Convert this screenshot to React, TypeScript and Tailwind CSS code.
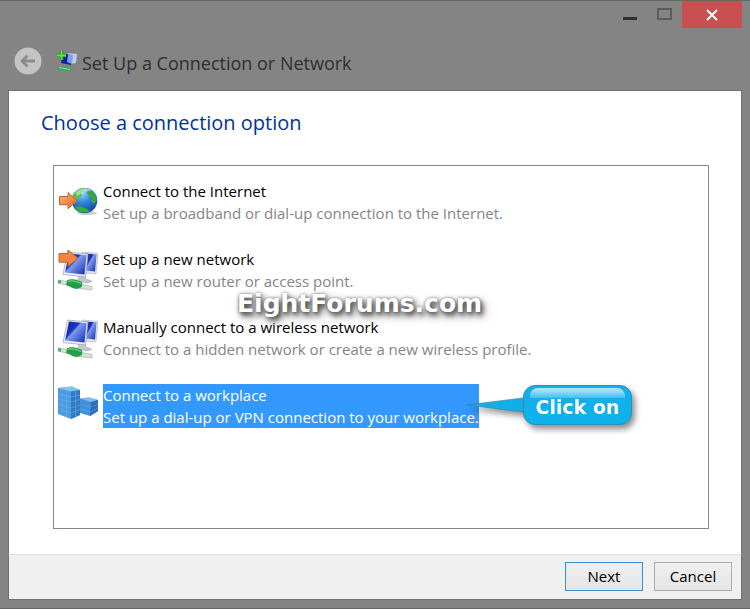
import React from 'react';

const GlobeIcon: React.FC = () => (
  <svg viewBox="0 0 40 40" className="size-10" aria-hidden="true">
    <defs>
      <radialGradient id="globe" cx="0.4" cy="0.2" r="0.85">
        <stop offset="0" stopColor="#a5dcff" />
        <stop offset="0.45" stopColor="#2f86dc" />
        <stop offset="1" stopColor="#0d3f9c" />
      </radialGradient>
      <linearGradient id="arrow" x1="0" y1="0" x2="1" y2="1">
        <stop offset="0" stopColor="#ffb57a" />
        <stop offset="1" stopColor="#e8641c" />
      </linearGradient>
    </defs>
    <ellipse cx="29" cy="33" rx="10" ry="2" fill="#c9ced3" />
    <circle cx="26.500" cy="20.500" r="12.800" fill="url(#globe)" />
    <path d="M16 13c3-3 6-5 10-5l1 3-4 2 1 3-4 2-2 5-4 1c-1-4 0-8 2-11z" fill="#57c24c" />
    <path d="M30 9c5 2 8 6 9 11l-3 4-3-3 1-4-4-2-1-3z" fill="#3aa83b" />
    <path d="M17 27l5-1 7 3 3 2c-5 3-12 2-15-4z" fill="#2fb235" />
    <path d="M18 12c4-4 12-5 16-1-5 0-9 1-15 5z" fill="#fff" opacity="0.45" />
    <path d="M1.500 16.500h8.500v-4l9 8.200-9 8v-4H1.500z" fill="url(#arrow)" stroke="#b96535" />
  </svg>
);

const NetworkIcon: React.FC<{ arrow?: boolean }> = ({ arrow }) => (
  <svg viewBox="0 0 40 44" className="h-11 w-10" aria-hidden="true">
    <defs>
      <linearGradient id="screen" x1="0" y1="0" x2="1" y2="0.9">
        <stop offset="0" stopColor="#1022a0" />
        <stop offset="0.4" stopColor="#1a35c4" />
        <stop offset="0.47" stopColor="#7e9bec" />
        <stop offset="1" stopColor="#1630b8" />
      </linearGradient>
    </defs>
    <path d="M24 4l16 1.500-2 20.500-11-1z" fill="#dfe4ea" stroke="#a8b0ba" strokeWidth="0.6" />
    <path d="M27 5.500l11.500 1-1.500 17-9-1z" fill="url(#screen)" />
    <path d="M20 28l7 0 1 3 6 2-4 2-13-2 4-2z" fill="#c3c8cf" stroke="#9aa2ab" strokeWidth="0.5" />
    <path d="M9.500 4l20.500 2-2.500 23-22.500-2.500z" fill="#e9edf2" stroke="#99a3b0" strokeWidth="0.7" />
    <path d="M11 5.500l17.500 1.700-2 19.300-19.500-2z" fill="url(#screen)" />
    <path d="M0 32l9 1.500 25 5v3.500l-12-1.500-22-5.500z" fill="#dbe2de" stroke="#98a69e" strokeWidth="0.6" />
    <path d="M0 32l3 .5v3.200l-3-.7z" fill="#4fae66" />
    <path d="M9 32.500c4-2 7-1 11 0l4 1.500v5l-5 2c-4 0-7-3-11-4z" fill="#1fa045" />
    <path d="M10 33.500c4-1.500 8 0 13 2" stroke="#8be29a" fill="none" />
    {arrow && (
      <path d="M1 5.500h9V2l10 8.200-10 8v-4H1z" fill="#f5853f" stroke="#b96535" />
    )}
  </svg>
);

const WorkplaceIcon: React.FC = () => (
  <svg viewBox="0 0 40 40" className="size-10" aria-hidden="true">
    <path d="M0 4l14-1.500 8 3.500v25l-9 4-13-5z" fill="#4a9be0" />
    <path d="M0 4l14-1.500 8 3.500-9 1.500z" fill="#83c5f1" />
    <path d="M13 7.500l9-1.500v25l-9 4z" fill="#3079c4" />
    <path d="M0 10l13 3 9-2M0 15l13 3 9-2.500M0 20l13 4 9-3M0 25l13 4 9-3.500M4 5v26M8.500 6v27M17.500 7v26" stroke="#6fb5ea" strokeWidth="0.5" fill="none" />
    <path d="M22 14.500l9-1 9 2.500v11l-8 5-10-3z" fill="#4192da" />
    <path d="M22 14.500l9-1 9 2.500-7 2z" fill="#83c0ec" />
    <path d="M33 18l7-2v11l-8 5z" fill="#2b6db8" />
    <path d="M22 20l10.500 3 7.500-3M22 25l10.500 3 7.500-4" stroke="#62a9e5" strokeWidth="0.5" fill="none" />
  </svg>
);

const TitleIcon: React.FC = () => (
  <svg viewBox="0 0 22 22" className="size-[22px]" aria-hidden="true">
    <path d="M12 3l9 1-1 9-6 1z" fill="#b9cdf0" />
    <path d="M6 4l10 1-1 10-10-2z" fill="#1020a4" />
    <path d="M12 5l5 0-1 9-5-2z" fill="#7d9fec" />
    <path d="M1 17l8-1 8 3v2l-8 0-8-2z" fill="#45a060" />
    <path d="M3 17.500l11 2" stroke="#9adba8" />
    <path d="M5.500 1v9M1 5.500h9" stroke="#1f8f1b" strokeWidth="3.500" />
    <path d="M5.500 1v9M1 5.500h9" stroke="#5be34a" strokeWidth="1.800" />
  </svg>
);

const Callout: React.FC = () => (
  <div className="pointer-events-none absolute top-px left-[409px] flex items-center drop-shadow-[3px_4px_3px_rgba(0,0,0,0.45)]">
    <svg viewBox="0 0 56 40" className="h-10 w-14" aria-hidden="true">
      <path d="M0 20L56 13v14z" fill="#12aee8" stroke="#397f9e" strokeWidth="0.6" />
    </svg>
    <div className="relative h-10 w-[109px] rounded-xl border border-[#2f8fb8] bg-[#0fb0ec] text-center">
      <div className="absolute inset-x-1.5 top-0.5 h-2.5 rounded-t-lg bg-gradient-to-b from-[#b5e8fc] to-[#3cc0f1]" />
      <span className="relative font-['DejaVu_Sans',sans-serif] text-[19px] leading-[42px] font-bold whitespace-nowrap text-white">
        Click on
      </span>
    </div>
  </div>
);

const App: React.FC = () => {
  const options = [
    {
      title: 'Connect to the Internet',
      text: 'Set up a broadband or dial-up connection to the Internet.',
      icon: <GlobeIcon />
    },
    {
      title: 'Set up a new network',
      text: 'Set up a new router or access point.',
      icon: <NetworkIcon arrow />
    },
    {
      title: 'Manually connect to a wireless network',
      text: 'Connect to a hidden network or create a new wireless profile.',
      icon: <NetworkIcon />
    },
    {
      title: 'Connect to a workplace',
      text: 'Set up a dial-up or VPN connection to your workplace.',
      icon: <WorkplaceIcon />,
      selected: true
    }
  ];

  return (
    <div className="flex min-h-screen flex-col border-y border-[#666] bg-[#848484] px-2 pb-2 font-['Open_Sans','Noto_Sans',sans-serif] text-[15px] text-black">
      <header>
        <div className="flex h-[27px] justify-end">
          <button aria-label="Minimize" className="flex w-8 justify-center pt-4">
            <span className="h-[3px] w-3.5 bg-[#303030]" />
          </button>
          <button aria-label="Maximize" className="flex w-9 justify-center pt-[7px]">
            <span className="h-3 w-[15px] border-2 border-[#5c5c5c]" />
          </button>
          <button aria-label="Close" className="flex w-[60px] items-center justify-center bg-[#c75050]">
            <svg viewBox="0 0 12 12" className="size-3" aria-hidden="true">
              <path d="M1 1l10 10M11 1L1 11" stroke="#fff" strokeWidth="2" />
            </svg>
          </button>
        </div>
        <div className="flex h-[62px] items-center pt-2 pb-1 pl-1.5">
          <button aria-label="Back">
            <svg viewBox="0 0 28 28" className="size-7" aria-hidden="true">
              <circle cx="14" cy="14" r="13.500" fill="#c4c4c4" />
              <path d="M21 14H8M13.500 8.500L8 14l5.500 5.500" fill="none" stroke="#8b8b8b" strokeWidth="2.800" />
            </svg>
          </button>
          <span className="ml-3.5">
            <TitleIcon />
          </span>
          <h1 className="ml-1 pt-1 text-lg leading-6 text-[#2f2f2f]">Set Up a Connection or Network</h1>
        </div>
      </header>

      <main className="flex flex-1 flex-col border border-b-0 border-[#707070] bg-white px-8 pt-5 pb-[25px]">
        <h2 className="mb-[30px] text-xl leading-6 text-[#003399]">Choose a connection option</h2>
        <div className="relative ml-3 flex flex-1 flex-col gap-6 border border-[#828790] py-3.5 pl-1">
          {options.map((option) => (
            <div key={option.title} className="relative flex">
              <button aria-pressed={!!option.selected} className="flex text-left leading-[22px] whitespace-nowrap">
                {option.icon}
                <span className={option.selected ? 'ml-[5px] bg-[#3399ff] text-white' : 'ml-[5px]'}>
                  <span className="block">{option.title}</span>
                  <span className={option.selected ? 'block' : 'block text-[#858585]'}>{option.text}</span>
                </span>
              </button>
              {option.selected && <Callout />}
            </div>
          ))}
          <div className="pointer-events-none absolute top-[120px] left-[183px] font-['DejaVu_Sans',sans-serif] text-[25px] leading-9 font-bold text-white [text-shadow:2px_3px_5px_#444,3px_4px_10px_#777,0_0_3px_#888]">
            EightForums.com
          </div>
        </div>
      </main>

      <footer className="flex justify-end gap-[11px] border border-t-[#dfdfdf] border-x-[#707070] border-b-[#707070] bg-[#f0f0f0] px-[9px] pt-[7px] pb-2">
        <button className="h-[29px] w-[78px] border border-[#3c8fd0] bg-gradient-to-b from-[#f0f0f0] to-[#e5e5e5] shadow-[inset_0_0_0_1px_#d9ecfa]">
          Next
        </button>
        <button className="h-[29px] w-[78px] border border-[#acacac] bg-gradient-to-b from-[#f0f0f0] to-[#e5e5e5]">
          Cancel
        </button>
      </footer>
    </div>
  );
};

export default App;
